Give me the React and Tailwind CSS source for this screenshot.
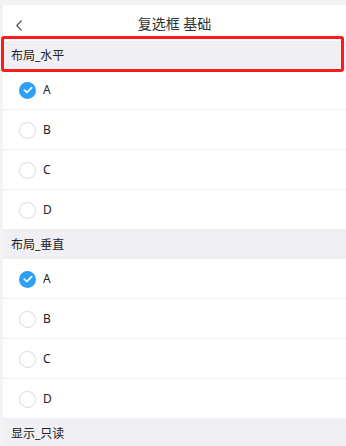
import React from "react";

const font = { fontFamily: '"Noto Sans", "Noto Sans CJK SC", sans-serif' };

function Check({ checked }) {
  if (checked) {
    return (
      <span className="flex h-[17px] w-[17px] items-center justify-center rounded-full bg-[#2d9ff7]">
        <svg width="10" height="8" viewBox="0 0 10 8" fill="none">
          <path d="M1.3 4.1 L3.9 6.5 L8.7 1.6" stroke="#fff" strokeWidth="1.7" strokeLinecap="round" strokeLinejoin="round" />
        </svg>
      </span>
    );
  }
  return <span className="box-border h-[17px] w-[17px] rounded-full border border-[#d9d9d9] bg-white" />;
}

function Row({ label, checked }) {
  return (
    <div className="flex h-[40px] items-center gap-[7px] border-b border-[#f0f0f0] bg-white pl-[16px] pt-[1px]">
      <Check checked={checked} />
      <span className="text-[12px] text-[#222]">{label}</span>
    </div>
  );
}

function Header({ title }) {
  return (
    <div className="flex h-[29px] items-center bg-[#efeff4] pl-[8px] pt-[1px] text-[12px] text-[#222]">
      {title}
    </div>
  );
}

export default function App() {
  const opts = ["A", "B", "C", "D"];
  return (
    <div className="relative h-[446px] w-[346px] overflow-hidden bg-[#f3f3f3] pl-[3px] pt-[5px]" style={font}>
      <div className="h-full bg-white">
        <div className="relative flex h-[36px] items-center justify-center pt-[1px]">
          <svg className="absolute left-[12px] top-[14px]" width="9" height="13" viewBox="0 0 9 13" fill="none">
            <path d="M6.5 1.5 L1.8 6.5 L6.5 11.5" stroke="#555" strokeWidth="1.2" />
          </svg>
          <span className="text-[14px] text-[#333]">复选框 基础</span>
        </div>
        <Header title="布局_水平" />
        {opts.map((o, i) => (
          <Row key={"a" + o} label={o} checked={i === 0} />
        ))}
        <Header title="布局_垂直" />
        {opts.map((o, i) => (
          <Row key={"b" + o} label={o} checked={i === 0} />
        ))}
        <Header title="显示_只读" />
      </div>
      <div className="pointer-events-none absolute left-[1px] top-[36px] h-[36px] w-[343px] rounded-[3px] border-[3px] border-[#ff1a1a]" />
    </div>
  );
}
